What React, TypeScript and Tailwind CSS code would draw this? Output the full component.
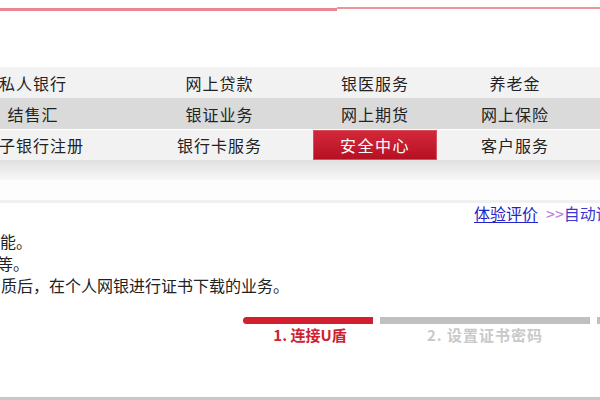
const rows: { bg: string; items: string[]; active?: number }[] = [
  { bg: 'bg-[#f2f2f2]', items: ['私人银行', '网上贷款', '银医服务', '养老金'] },
  { bg: 'bg-[#dadada]', items: ['结售汇', '银证业务', '网上期货', '网上保险'] },
  { bg: 'bg-[#f2f2f2]', items: ['电子银行注册', '银行卡服务', '安全中心', '客户服务'], active: 2 },
]

function NavRow({ bg, items, active, last }: { bg: string; items: string[]; active?: number; last?: boolean }) {
  return (
    <div className={`${bg} ${last ? 'h-[30px]' : 'h-[31px]'}`}>
      <div className="-ml-[60px] grid h-full grid-cols-[186px_187px_124px_156px_1fr]">
        {items.map((label, i) =>
          i === active ? (
            <div
              key={label}
              className="flex items-center justify-center border border-[#d9505c] bg-gradient-to-b from-[#d3283a] to-[#b70f22] tracking-[1.5px] text-white"
            >
              {label}
            </div>
          ) : (
            <div key={label} className="flex items-center justify-center whitespace-nowrap tracking-[1px]">
              {label}
            </div>
          ),
        )}
      </div>
    </div>
  )
}

// lines are cut at the left edge of the picture, so each keeps only its tail
function TailLine({ width, text }: { width: string; text: string }) {
  return (
    <div className="flex h-[22px] items-center">
      <div className={`${width} flex justify-end overflow-hidden whitespace-nowrap`}>{text}</div>
    </div>
  )
}

export default function App() {
  return (
    <div className="flex h-[400px] w-[600px] flex-col overflow-hidden bg-white font-['Noto_Sans_CJK_SC',sans-serif] text-[16px] text-[#222]">
      {/* top rule */}
      <div className="flex h-[67px] items-start">
        <div className="mt-[8px] h-[3px] w-[337px] bg-[#ea868f]" />
        <div className="mt-[7px] h-[2px] flex-1 bg-[#ee959c]" />
      </div>

      {/* menu */}
      <NavRow bg={rows[0].bg} items={rows[0].items} />
      <NavRow bg={rows[1].bg} items={rows[1].items} />
      <div className="h-px bg-white" />
      <NavRow bg={rows[2].bg} items={rows[2].items} active={rows[2].active} last />
      <div className="h-[20px] bg-gradient-to-b from-[#e0e0e0] to-[#f8f8f8]" />
      <div className="h-[20px] bg-[#fdfdfd]" />
      <div className="h-[3px] bg-[#f0f0f0]" />

      {/* links */}
      <div className="flex h-[20px] items-center gap-[8px] whitespace-nowrap pl-[474px]">
        <span className="text-[#2323c8] underline underline-offset-2">体验评价</span>
        <span>
          <span className="text-[#c27be6]">&gt;&gt;</span>
          <span className="text-[#3a3ad0]">自动评价</span>
        </span>
      </div>

      {/* body */}
      <div className="mt-[7px] flex flex-col">
        <TailLine width="w-[32px]" text="证书安全功能。" />
        <TailLine width="w-[29px]" text="证书更新等。" />
        <TailLine width="w-[289px]" text="资质后，在个人网银进行证书下载的业务。" />
      </div>

      {/* steps */}
      <div className="mt-[21px] flex gap-[7px] pl-[243px]">
        <div className="flex w-[130px] flex-col items-center">
          <div className="h-[7px] w-full rounded-l-full bg-[#d11f2e]" />
          <div className="mt-[1px] h-[20px] pl-[4px] text-[15px] font-bold leading-[20px] text-[#cf2230]">1. 连接U盾</div>
        </div>
        <div className="flex w-[210px] flex-col items-center">
          <div className="h-[7px] w-full bg-[#c0c0c0]" />
          <div className="mt-[1px] h-[20px] text-[15px] font-bold leading-[20px] tracking-[1px] text-[#c9c9c9]">2. 设置证书密码</div>
        </div>
        <div className="flex flex-1 flex-col">
          <div className="h-[7px] w-full bg-[#c0c0c0]" />
        </div>
      </div>

      {/* bottom rule */}
      <div className="mt-auto h-[3px] bg-[#c8c8c8]" />
    </div>
  )
}
